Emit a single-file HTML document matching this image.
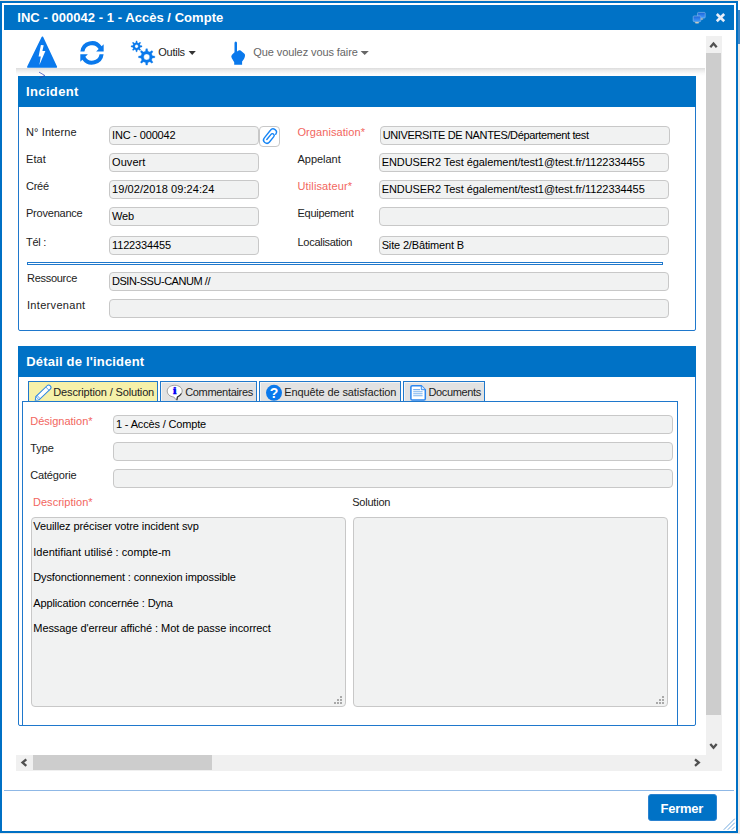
<!DOCTYPE html>
<html lang="fr">
<head>
<meta charset="utf-8">
<title>INC - 000042 - 1 - Accès / Compte</title>
<style>
html,body{margin:0;padding:0;}
body{width:740px;height:834px;overflow:hidden;background:#efeae5;position:relative;font-family:"Liberation Sans",sans-serif;font-size:11px;color:#1a1a1a;}
.a{position:absolute;}
.t{position:absolute;white-space:pre;color:#222;}
.f{position:absolute;box-sizing:border-box;height:19px;border:1px solid #c8c8c8;border-radius:4px;background:#f1f2f2;}
.ta{position:absolute;box-sizing:border-box;border:1px solid #c8c8c8;border-radius:4px;background:#f1f2f2;}
.tab{position:absolute;top:381px;height:21px;box-sizing:border-box;border:1px solid #1f78cc;border-bottom:0;background:#e2e2e2;box-shadow:inset 1px 1px 0 #f4f4f4;}
svg{position:absolute;overflow:visible;}
</style>
</head>
<body>

<div class="a" style="left:0;top:0;width:740px;height:1px;background:#f4e8db;"></div>
<div class="a" style="left:738px;top:1px;width:2px;height:9px;background:#fff;"></div>
<div class="a" style="left:738px;top:10px;width:2px;height:34px;background:#3f86c6;"></div>
<div class="a" style="left:0;top:1px;width:734px;height:828px;border:2px solid #0070c4;background:#fff;"></div>
<div class="a" style="left:4px;top:5px;width:730px;height:25px;background:#0072c6;"></div>
<div class="t" style="left:17.3px;top:10.00px;font-size:13px;line-height:15px;font-weight:bold;color:#fff;letter-spacing:0.039px;">INC - 000042 - 1 - Accès / Compte</div>
<div class="a" style="left:16px;top:68px;width:689px;height:8px;background:linear-gradient(#dcdcdc,#ececec 30%,#fafafa 70%,#fff);"></div>
<div class="t" style="left:158.3px;top:45.69px;font-size:11px;line-height:13px;letter-spacing:-0.271px;">Outils</div>
<div class="t" style="left:253.3px;top:45.69px;font-size:11px;line-height:13px;color:#666;letter-spacing:-0.090px;">Que voulez vous faire</div>
<div class="a" style="left:706px;top:36px;width:16px;height:735px;background:#f0f0f0;"></div>
<div class="a" style="left:706px;top:53px;width:15px;height:662px;background:#cdcdcd;"></div>
<div class="a" style="left:16px;top:755px;width:706px;height:16px;background:#f0f0f0;"></div>
<div class="a" style="left:33px;top:755px;width:179px;height:15px;background:#cdcdcd;"></div>
<svg style="left:0;top:0" width="740" height="834"><g fill="none" stroke="#505050" stroke-width="2.3"><path d="M710.3 47.3 L713.5 43.6 L716.7 47.3"/><path d="M710.3 744 L713.5 747.8 L716.7 744"/><path d="M26.3 759.4 L22.5 762.6 L26.3 765.8"/><path d="M695 759.4 L698.8 762.6 L695 765.8"/></g></svg>
<div class="a" style="left:4px;top:790px;width:730px;height:1px;background:#8fb8e6;"></div>
<div class="a" style="left:648px;top:794px;width:69px;height:27px;box-sizing:border-box;background:#0072c6;border:1px solid #2a82d0;border-radius:3px;"></div>
<div class="t" style="left:660.6px;top:801.00px;font-size:13px;line-height:15px;font-weight:bold;color:#fff;letter-spacing:-0.263px;">Fermer</div>
<svg style="left:0;top:0" width="740" height="834"><g stroke="#2a7fd0" stroke-width="1" stroke-dasharray="1 0.4" fill="none"><path d="M724 829.5 L735 818.5"/><path d="M728 829.5 L735 822.5"/><path d="M732 829.5 L735 826.5"/></g></svg>
<div class="a" style="left:18px;top:76px;width:678px;height:255px;box-sizing:border-box;border:1px solid #1f78cc;border-radius:0 0 2px 2px;"></div>
<div class="a" style="left:18px;top:76px;width:678px;height:31px;background:#0072c6;"></div>
<div class="t" style="left:26px;top:84.00px;font-size:13px;line-height:15px;font-weight:bold;color:#fff;letter-spacing:0.370px;">Incident</div>
<div class="t" style="left:26px;top:125.69px;font-size:11px;line-height:13px;letter-spacing:0.109px;">N° Interne</div>
<div class="f" style="left:109px;top:126px;width:150px;"></div>
<div class="t" style="left:112px;top:128.69px;font-size:11px;line-height:13px;color:#000;letter-spacing:-0.161px;">INC - 000042</div>
<div class="t" style="left:297.5px;top:125.69px;font-size:11px;line-height:13px;color:#f26660;letter-spacing:0.065px;">Organisation*</div>
<div class="f" style="left:380px;top:126px;width:290px;"></div>
<div class="t" style="left:382.7px;top:128.69px;font-size:11px;line-height:13px;color:#000;letter-spacing:-0.364px;">UNIVERSITE DE NANTES/Département test</div>
<div class="t" style="left:26px;top:152.69px;font-size:11px;line-height:13px;letter-spacing:0.105px;">Etat</div>
<div class="f" style="left:109px;top:153px;width:150px;"></div>
<div class="t" style="left:112px;top:155.69px;font-size:11px;line-height:13px;color:#000;letter-spacing:0.081px;">Ouvert</div>
<div class="t" style="left:297.5px;top:152.69px;font-size:11px;line-height:13px;letter-spacing:-0.023px;">Appelant</div>
<div class="f" style="left:379px;top:153px;width:290px;"></div>
<div class="t" style="left:381.7px;top:155.69px;font-size:11px;line-height:13px;color:#000;letter-spacing:-0.070px;">ENDUSER2 Test également/test1@test.fr/1122334455</div>
<div class="t" style="left:26px;top:179.69px;font-size:11px;line-height:13px;letter-spacing:-0.273px;">Créé</div>
<div class="f" style="left:109px;top:180px;width:150px;"></div>
<div class="t" style="left:112px;top:182.69px;font-size:11px;line-height:13px;color:#000;letter-spacing:0.082px;">19/02/2018 09:24:24</div>
<div class="t" style="left:297.5px;top:179.69px;font-size:11px;line-height:13px;color:#f26660;letter-spacing:0.126px;">Utilisateur*</div>
<div class="f" style="left:379px;top:180px;width:290px;"></div>
<div class="t" style="left:381.7px;top:182.69px;font-size:11px;line-height:13px;color:#000;letter-spacing:-0.070px;">ENDUSER2 Test également/test1@test.fr/1122334455</div>
<div class="t" style="left:26px;top:206.69px;font-size:11px;line-height:13px;letter-spacing:-0.222px;">Provenance</div>
<div class="f" style="left:109px;top:207px;width:150px;"></div>
<div class="t" style="left:112px;top:209.69px;font-size:11px;line-height:13px;color:#000;letter-spacing:-0.207px;">Web</div>
<div class="t" style="left:297.5px;top:206.69px;font-size:11px;line-height:13px;letter-spacing:-0.272px;">Equipement</div>
<div class="f" style="left:379px;top:207px;width:290px;"></div>
<div class="t" style="left:26px;top:235.69px;font-size:11px;line-height:13px;letter-spacing:-0.281px;">Tél :</div>
<div class="f" style="left:109px;top:236px;width:150px;"></div>
<div class="t" style="left:112px;top:238.69px;font-size:11px;line-height:13px;color:#000;letter-spacing:-0.138px;">1122334455</div>
<div class="t" style="left:297.5px;top:235.69px;font-size:11px;line-height:13px;letter-spacing:-0.283px;">Localisation</div>
<div class="f" style="left:379px;top:236px;width:290px;"></div>
<div class="t" style="left:381.7px;top:238.69px;font-size:11px;line-height:13px;color:#000;letter-spacing:-0.159px;">Site 2/Bâtiment B</div>
<div class="a" style="left:259px;top:126px;width:21px;height:21px;box-sizing:border-box;border:1px solid #c8c8c8;border-radius:4px;background:#fff;"></div>
<svg style="left:0;top:0" width="740" height="834"><g transform="translate(266.9 139.9) rotate(-51)" fill="none" stroke="#1685f5" stroke-width="1.4" stroke-linecap="round"><path d="M9.9 3.3 A3.3 3.3 0 0 0 9.7 -3.3 L0 -3.3 A3.3 3.3 0 0 0 0 3.3 L6.9 3.3 A1.8 1.8 0 0 0 6.9 -0.3 L0.2 -0.3"/></g></svg>
<div class="a" style="left:27px;top:262px;width:636px;height:3px;box-sizing:border-box;border:1px solid #1f78cc;"></div>
<div class="t" style="left:27px;top:271.69px;font-size:11px;line-height:13px;letter-spacing:-0.286px;">Ressource</div>
<div class="t" style="left:27px;top:298.69px;font-size:11px;line-height:13px;letter-spacing:0.314px;">Intervenant</div>
<div class="f" style="left:109px;top:272px;width:560px;"></div>
<div class="f" style="left:109px;top:299px;width:560px;"></div>
<div class="t" style="left:112px;top:274.69px;font-size:11px;line-height:13px;color:#000;letter-spacing:-0.455px;">DSIN-SSU-CANUM //</div>
<div class="a" style="left:18px;top:346px;width:678px;height:380px;box-sizing:border-box;border:1px solid #1f78cc;border-radius:0 0 2px 2px;"></div>
<div class="a" style="left:18px;top:346px;width:678px;height:31px;background:#0072c6;"></div>
<div class="t" style="left:26.3px;top:354.00px;font-size:13px;line-height:15px;font-weight:bold;color:#fff;letter-spacing:0.183px;">Détail de l'incident</div>
<div class="a" style="left:22px;top:401px;width:656px;height:324px;box-sizing:border-box;border:1px solid #1f78cc;border-bottom:0;"></div>
<div class="tab" style="left:28px;width:130px;background:#f6f1a9;box-shadow:none;"></div>
<div class="tab" style="left:160px;width:97px;"></div>
<div class="tab" style="left:259px;width:142px;"></div>
<div class="tab" style="left:403px;width:82px;"></div>
<div class="t" style="left:53.3px;top:385.69px;font-size:11px;line-height:13px;letter-spacing:-0.143px;">Description / Solution</div>
<div class="t" style="left:185.2px;top:385.69px;font-size:11px;line-height:13px;letter-spacing:-0.319px;">Commentaires</div>
<div class="t" style="left:284.2px;top:385.69px;font-size:11px;line-height:13px;letter-spacing:-0.098px;">Enquête de satisfaction</div>
<div class="t" style="left:428.4px;top:385.69px;font-size:11px;line-height:13px;letter-spacing:-0.338px;">Documents</div>
<div class="a" style="left:22px;top:401px;width:656px;height:1px;background:#1f78cc;"></div>
<div class="t" style="left:30.2px;top:414.69px;font-size:11px;line-height:13px;color:#f26660;">Désignation*</div>
<div class="t" style="left:30.2px;top:441.69px;font-size:11px;line-height:13px;letter-spacing:-0.065px;">Type</div>
<div class="t" style="left:30.2px;top:468.69px;font-size:11px;line-height:13px;letter-spacing:-0.156px;">Catégorie</div>
<div class="f" style="left:113px;top:415px;width:560px;"></div>
<div class="f" style="left:113px;top:442px;width:560px;"></div>
<div class="f" style="left:113px;top:469px;width:560px;"></div>
<div class="t" style="left:116px;top:417.69px;font-size:11px;line-height:13px;color:#000;letter-spacing:-0.163px;">1 - Accès / Compte</div>
<div class="t" style="left:33px;top:495.69px;font-size:11px;line-height:13px;color:#f26660;letter-spacing:0.024px;">Description*</div>
<div class="t" style="left:352.2px;top:495.69px;font-size:11px;line-height:13px;letter-spacing:-0.221px;">Solution</div>
<div class="ta" style="left:31px;top:517px;width:315px;height:190px;"></div>
<div class="ta" style="left:353px;top:517px;width:315px;height:190px;"></div>
<div class="t" style="left:33.3px;top:519.69px;font-size:11px;line-height:13px;color:#000;letter-spacing:-0.090px;">Veuillez préciser votre incident svp</div>
<div class="t" style="left:33.3px;top:545.69px;font-size:11px;line-height:13px;color:#000;letter-spacing:0.018px;">Identifiant utilisé : compte-m</div>
<div class="t" style="left:33.3px;top:570.69px;font-size:11px;line-height:13px;color:#000;letter-spacing:-0.150px;">Dysfonctionnement : connexion impossible</div>
<div class="t" style="left:33.3px;top:596.69px;font-size:11px;line-height:13px;color:#000;letter-spacing:-0.128px;">Application concernée : Dyna</div>
<div class="t" style="left:33.3px;top:621.69px;font-size:11px;line-height:13px;color:#000;letter-spacing:-0.071px;">Message d'erreur affiché : Mot de passe incorrect</div>
<svg style="left:334px;top:696px" width="8" height="8" shape-rendering="crispEdges"><g fill="#a9a9a9"><rect x="6" y="0" width="2" height="2"/><rect x="3" y="3" width="2" height="2"/><rect x="6" y="3" width="2" height="2"/><rect x="0" y="6" width="2" height="2"/><rect x="3" y="6" width="2" height="2"/><rect x="6" y="6" width="2" height="2"/></g></svg>
<svg style="left:656px;top:696px" width="8" height="8" shape-rendering="crispEdges"><g fill="#a9a9a9"><rect x="6" y="0" width="2" height="2"/><rect x="3" y="3" width="2" height="2"/><rect x="6" y="3" width="2" height="2"/><rect x="0" y="6" width="2" height="2"/><rect x="3" y="6" width="2" height="2"/><rect x="6" y="6" width="2" height="2"/></g></svg>
<svg style="left:0;top:0" width="740" height="834" viewBox="0 0 740 834">
<path d="M42.4 37.4 L56.2 66.9 L28 66.9 Z" fill="#0a79ec" stroke="#0a79ec" stroke-width="1.8" stroke-linejoin="round"/>
<path d="M40.9 45 L43.7 45.2 L42.4 50.9 L45.4 50.9 L39.4 65.1 L40.8 56.6 L38.6 56.6 Z" fill="#fff"/>
<path d="M39 72.1 L44.8 75.5 L39.5 78.2" fill="none" stroke="#2a3fb0" stroke-width="0.7"/>
<path d="M80.38 51.56 A11.7 11.7 0 0 1 101.64 46.27 L103.67 44.27 L103.67 51.56 L96.13 51.56 L98.65 49.08 A7.7 7.7 0 0 0 84.42 51.56 Z" fill="#0a79ec"/><path d="M80.38 51.56 A11.7 11.7 0 0 1 101.64 46.27 L103.67 44.27 L103.67 51.56 L96.13 51.56 L98.65 49.08 A7.7 7.7 0 0 0 84.42 51.56 Z" fill="#0a79ec" transform="rotate(180 92 52.95)"/>
<path d="M135.78 42.64 L136.03 40.88 L137.07 40.88 L137.32 42.64 L138.64 43.18 L140.06 42.12 L140.79 42.85 L139.73 44.27 L140.27 45.59 L142.03 45.84 L142.03 46.88 L140.27 47.13 L139.73 48.45 L140.79 49.87 L140.06 50.60 L138.64 49.54 L137.32 50.08 L137.07 51.84 L136.03 51.84 L135.78 50.08 L134.46 49.54 L133.04 50.60 L132.31 49.87 L133.37 48.45 L132.83 47.13 L131.07 46.88 L131.07 45.84 L132.83 45.59 L133.37 44.27 L132.31 42.85 L133.04 42.12 L134.46 43.18 Z M134.75 46.36 a1.8 1.8 0 1 0 3.6 0 a1.8 1.8 0 1 0 -3.6 0 Z" fill="#0a79ec" fill-rule="evenodd" stroke="#0a79ec" stroke-width="0.3" stroke-linejoin="round"/>
<path d="M145.49 51.22 L145.90 48.74 L147.44 48.74 L147.85 51.22 L149.85 52.05 L151.90 50.58 L152.99 51.67 L151.52 53.72 L152.35 55.72 L154.83 56.13 L154.83 57.67 L152.35 58.08 L151.52 60.08 L152.99 62.13 L151.90 63.22 L149.85 61.75 L147.85 62.58 L147.44 65.06 L145.90 65.06 L145.49 62.58 L143.49 61.75 L141.44 63.22 L140.35 62.13 L141.82 60.08 L140.99 58.08 L138.51 57.67 L138.51 56.13 L140.99 55.72 L141.82 53.72 L140.35 51.67 L141.44 50.58 L143.49 52.05 Z M143.67 56.90 a3.0 3.0 0 1 0 6.0 0 a3.0 3.0 0 1 0 -6.0 0 Z" fill="#0a79ec" fill-rule="evenodd" stroke="#0a79ec" stroke-width="0.3" stroke-linejoin="round"/>
<path d="M188.6 51 L195.8 51 L192.2 55 Z" fill="#333"/>
<path d="M360.6 51 L368.8 51 L364.7 55 Z" fill="#666"/>
<path d="M234.5 43 Q234.5 41.4 235.75 41.4 Q237 41.4 237 43 L237 51.6 L239 50.3 Q239.8 49.9 240.6 50.5 L244.2 53.6 Q245.3 54.6 245 56 L244.6 57.6 Q244.3 58.8 243.6 59.6 L242.1 61.6 L242.1 64.7 L234.2 64.7 L234.2 62.2 L231.7 58 Q230.7 56.2 232 54.8 L234.5 52.3 Z" fill="#0a79ec"/>
<defs><linearGradient id="mg" x1="0" y1="0" x2="0" y2="1"><stop offset="0" stop-color="#1b62d8"/><stop offset="1" stop-color="#3f9cff"/></linearGradient></defs>
<rect x="697.6" y="12.4" width="7.6" height="5.6" rx="0.8" fill="url(#mg)" stroke="#7fb4ea" stroke-width="0.7"/>
<ellipse cx="701.4" cy="19" rx="2" ry="0.7" fill="#c9c3b6"/>
<rect x="693.2" y="16" width="7.6" height="5.6" rx="0.8" fill="url(#mg)" stroke="#7fb4ea" stroke-width="0.7"/>
<ellipse cx="697" cy="22.7" rx="2.3" ry="0.8" fill="#d8cfbf"/>
<path d="M716.8 14 L724.2 21.2 M724.2 14 L716.8 21.2" stroke="#e9eef8" stroke-width="2.6" fill="none"/>
<g transform="translate(35.3 400.3) rotate(-43.9)"><path d="M0 0 L3 -2.3 L18.6 -2.3 Q20.8 -2.3 20.8 0 Q20.8 2.3 18.6 2.3 L3 2.3 Z" fill="#fff" stroke="#2a86e4" stroke-width="1"/><path d="M3 -2.3 L3 2.3 M4.6 -2.3 L4.6 2.3 M16.8 -2.3 L16.8 2.3" stroke="#2a86e4" stroke-width="0.7" fill="none"/></g>
<path d="M174.7 385.3 C179.2 385.3 182.2 387.9 182.2 391 C182.2 393.9 179.9 396 177.2 396.7 L176.6 400.2 L173.6 396.9 C170 396.7 167.2 394.2 167.2 391 C167.2 387.9 170.2 385.3 174.7 385.3 Z" fill="#fff" stroke="#8a8a8a" stroke-width="0.8"/>
<path d="M181.4 393.6 C180.4 395.4 178.9 396.4 177.5 396.9 L176.9 400.2" fill="none" stroke="#333" stroke-width="1.1"/>
<text transform="translate(174.75 394.4) scale(1.35 1)" text-anchor="middle" font-family="Liberation Serif,serif" font-weight="bold" font-size="10.5" fill="#0000f5" stroke="#0000f5" stroke-width="0.3">i</text>
<circle cx="274" cy="392.8" r="8" fill="#0a79ec"/>
<text x="274" y="397.9" text-anchor="middle" font-family="Liberation Sans,sans-serif" font-weight="bold" font-size="14" fill="#fff">?</text>
<path d="M412.3 385.7 L421.3 385.7 L425.3 389.7 L425.3 398.7 Q425.3 400.1 423.9 400.1 L412.3 400.1 Q410.9 400.1 410.9 398.7 L410.9 387.1 Q410.9 385.7 412.3 385.7 Z" fill="#fff" stroke="#2a86f0" stroke-width="1.5"/>
<path d="M421.3 385.7 L421.3 389.7 L425.3 389.7" fill="#dbeafc" stroke="#2a86f0" stroke-width="0.9"/>
<path d="M413.2 389.6 H420 M413.2 391.7 H422.6 M413.2 393.7 H422.6 M413.2 395.8 H422.6" stroke="#7ab2f0" stroke-width="1.1" fill="none"/>
</svg>
</body>
</html>
